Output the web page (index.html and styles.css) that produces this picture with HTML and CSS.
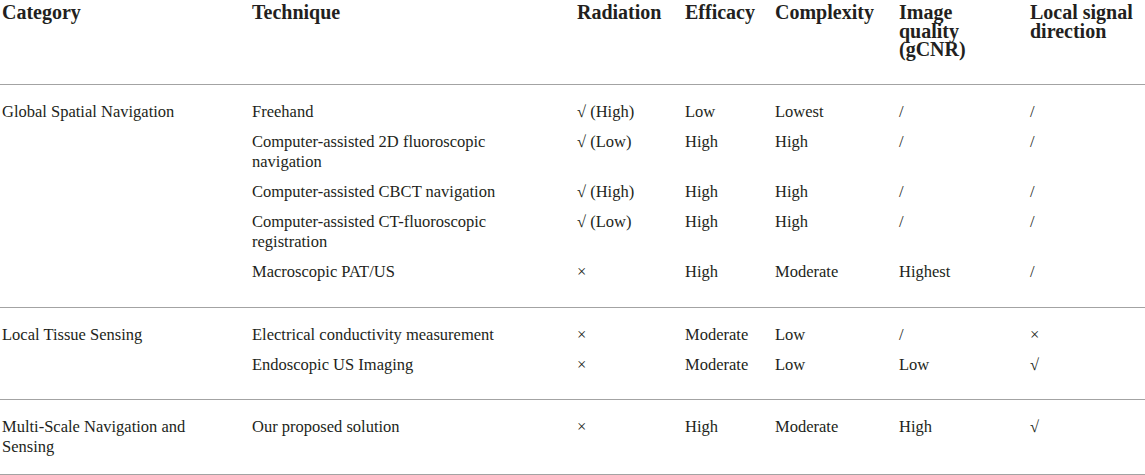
FILE: index.html
```html
<!DOCTYPE html>
<html lang="en">
<head>
<meta charset="utf-8">
<title>Navigation techniques comparison</title>
<link rel="stylesheet" href="styles.css">
</head>
<body>
<table class="cmp">
  <colgroup>
    <col class="w-cat">
    <col class="w-tech">
    <col class="w-rad">
    <col class="w-eff">
    <col class="w-cpx">
    <col class="w-img">
    <col class="w-dir">
  </colgroup>
  <thead>
    <tr>
      <th class="cat">Category</th>
      <th class="tech">Technique</th>
      <th>Radiation</th>
      <th>Efficacy</th>
      <th>Complexity</th>
      <th class="img">Image quality (gCNR)</th>
      <th>Local signal direction</th>
    </tr>
  </thead>
  <tbody class="grp g1">
    <tr class="first">
      <td class="cat">Global Spatial Navigation</td>
      <td class="tech">Freehand</td>
      <td>√ (High)</td>
      <td>Low</td>
      <td>Lowest</td>
      <td>/</td>
      <td>/</td>
    </tr>
    <tr>
      <td class="cat"></td>
      <td class="tech">Computer-assisted 2D fluoroscopic navigation</td>
      <td>√ (Low)</td>
      <td>High</td>
      <td>High</td>
      <td>/</td>
      <td>/</td>
    </tr>
    <tr>
      <td class="cat"></td>
      <td class="tech">Computer-assisted CBCT navigation</td>
      <td>√ (High)</td>
      <td>High</td>
      <td>High</td>
      <td>/</td>
      <td>/</td>
    </tr>
    <tr>
      <td class="cat"></td>
      <td class="tech">Computer-assisted CT-fluoroscopic registration</td>
      <td>√ (Low)</td>
      <td>High</td>
      <td>High</td>
      <td>/</td>
      <td>/</td>
    </tr>
    <tr class="last">
      <td class="cat"></td>
      <td class="tech">Macroscopic PAT/US</td>
      <td>×</td>
      <td>High</td>
      <td>Moderate</td>
      <td>Highest</td>
      <td>/</td>
    </tr>
  </tbody>
  <tbody class="grp g2">
    <tr class="first">
      <td class="cat">Local Tissue Sensing</td>
      <td class="tech">Electrical conductivity measurement</td>
      <td>×</td>
      <td>Moderate</td>
      <td>Low</td>
      <td>/</td>
      <td>×</td>
    </tr>
    <tr class="last">
      <td class="cat"></td>
      <td class="tech">Endoscopic US Imaging</td>
      <td>×</td>
      <td>Moderate</td>
      <td>Low</td>
      <td>Low</td>
      <td>√</td>
    </tr>
  </tbody>
  <tbody class="grp g3">
    <tr class="first last">
      <td class="cat">Multi-Scale Navigation and Sensing</td>
      <td class="tech">Our proposed solution</td>
      <td>×</td>
      <td>High</td>
      <td>Moderate</td>
      <td>High</td>
      <td>√</td>
    </tr>
  </tbody>
</table>
</body>
</html>
```

FILE: styles.css
```css
html, body {
  margin: 0;
  padding: 0;
  background: #ffffff;
}

.cmp {
  width: 1145px;
  table-layout: fixed;
  border-collapse: collapse;
  border-spacing: 0;
  font-family: "Liberation Serif", "Times New Roman", serif;
  color: #231f20;
}

.w-cat { width: 252px; }
.w-tech { width: 325px; }
.w-rad { width: 108px; }
.w-eff { width: 90px; }
.w-cpx { width: 124px; }
.w-img { width: 131px; }
.w-dir { width: 115px; }

.cmp th,
.cmp td {
  text-align: left;
  vertical-align: top;
  padding: 0;
}

.cmp th {
  font-size: 20px;
  font-weight: bold;
  line-height: 18.5px;
  padding: 3px 0 25.5px 0;
  color: #231f20;
}

.cmp th.cat,
.cmp td.cat {
  padding-left: 2px;
  padding-right: 30px;
}

.cmp th.tech,
.cmp td.tech {
  padding-right: 25px;
}

.cmp th.img {
  padding-right: 30px;
}

.cmp td {
  font-size: 16.5px;
  line-height: 20px;
  padding-top: 5px;
  padding-bottom: 5px;
}

.grp {
  border-top: 1px solid #a3a3a3;
}

.g3 {
  border-bottom: 1px solid #a3a3a3;
}

.cmp tr.first td {
  padding-top: 17px;
}

.g1 tr.last td {
  padding-bottom: 25px;
}

.g2 tr.last td {
  padding-bottom: 24px;
}

.g3 tr.last td {
  padding-bottom: 17px;
}
```
